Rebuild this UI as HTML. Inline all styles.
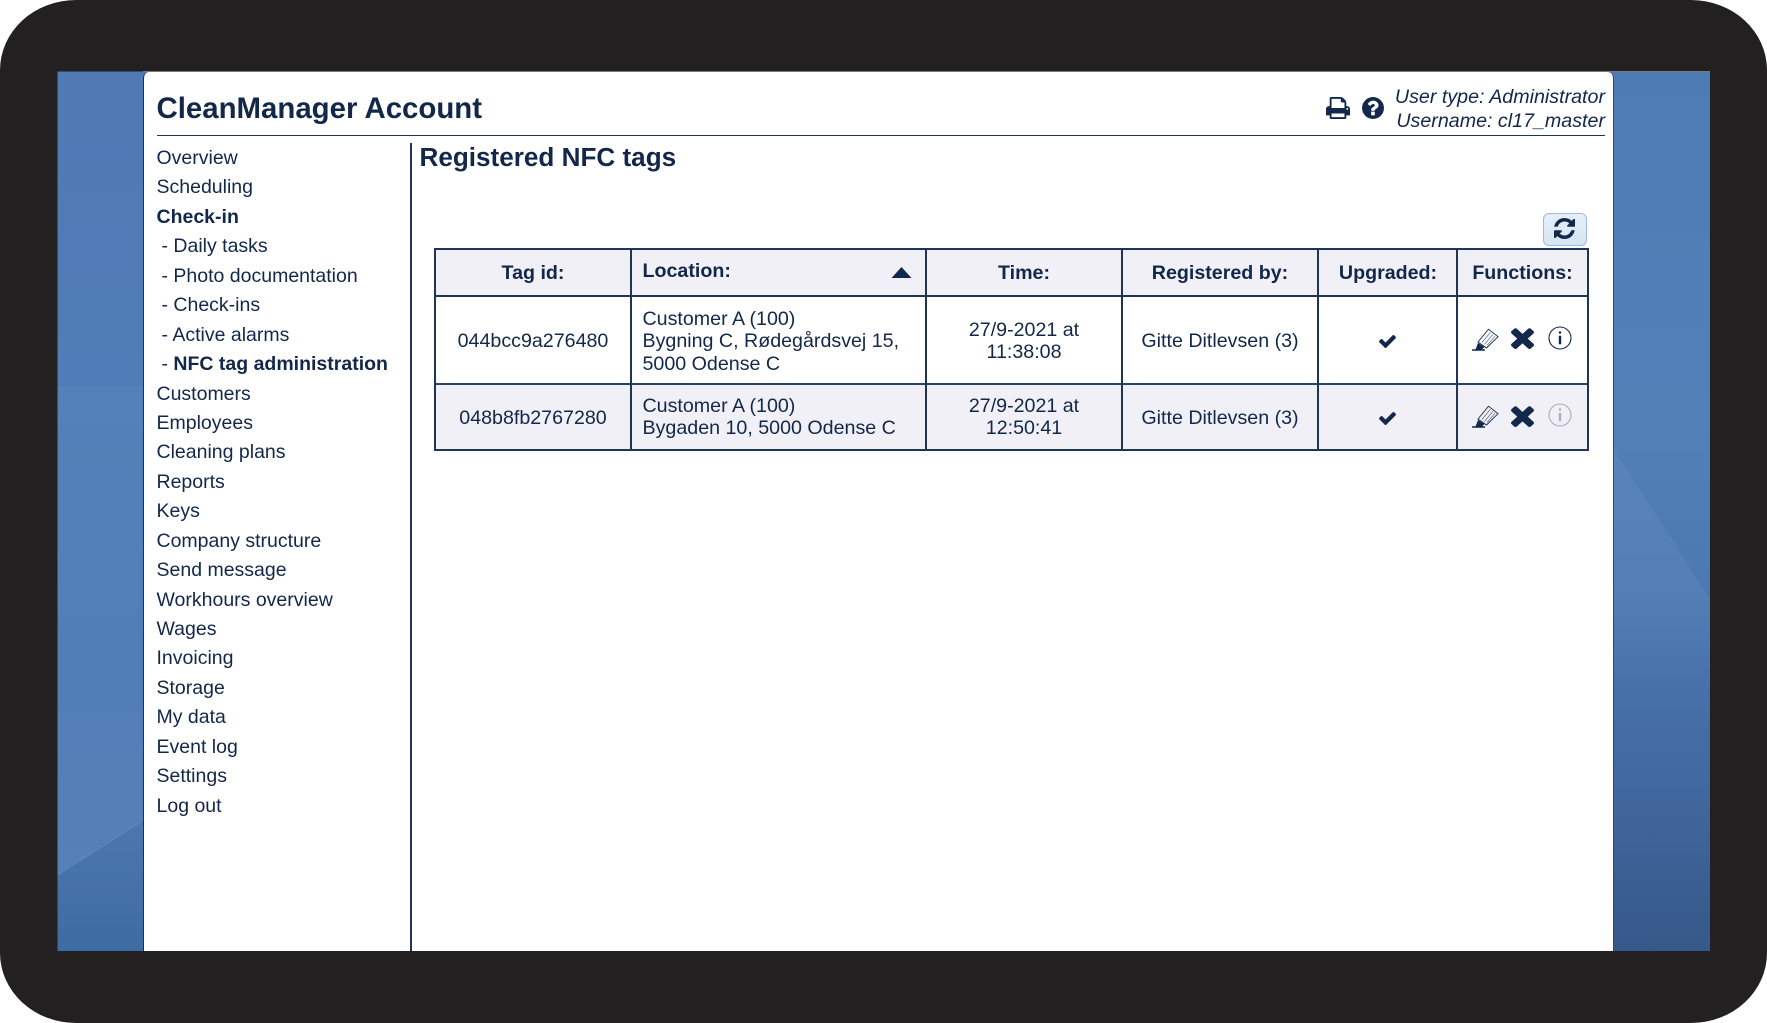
<!DOCTYPE html>
<html><head><meta charset="utf-8"><title>CleanManager Account</title>
<style>
html,body{margin:0;padding:0;background:#fff;width:1767px;height:1023px;overflow:hidden}
body{font-family:"Liberation Sans",Arial,sans-serif;color:#12274a;position:relative}
#frame{position:absolute;left:0;top:0;width:1767px;height:1023px;background:#222021;border-radius:76px/70px;overflow:hidden;filter:blur(.3px)}
#bg{position:absolute;left:0;top:0}
#panel{position:absolute;left:143px;top:72px;width:1469px;height:879px;background:#fff;border-left:1.5px solid #1c3358;border-right:1.5px solid #30476e;border-radius:6px 6px 0 0;box-sizing:content-box}
.a{position:absolute;white-space:nowrap}
.hl{position:absolute;background:#1e3558}
#nav{position:absolute;left:156.5px;top:144px;font-size:19.5px;line-height:29.45px;white-space:nowrap}
#nav div{height:29.45px}
#nav .s{padding-left:5px}
b{font-weight:700}
.c{text-align:center;font-size:19.65px;line-height:22.5px}
.l{font-size:19.65px;line-height:22.5px}
.h{font-weight:700;font-size:19.65px;line-height:22px;text-align:center}
.cell{position:absolute;background:#f0f0f6}
svg.i{position:absolute;fill:#13294b}
</style></head>
<body>
<div id="frame">
<svg id="bg" width="1767" height="1023" xmlns="http://www.w3.org/2000/svg">
<defs>
<linearGradient id="lt" x1="0" y1="0" x2="0" y2="1"><stop offset="0" stop-color="#4f7ab4"/><stop offset="1" stop-color="#507cb7"/></linearGradient>
<linearGradient id="lm" x1="0" y1="0" x2="0" y2="1"><stop offset="0" stop-color="#5481b9"/><stop offset=".6" stop-color="#527eb7"/><stop offset="1" stop-color="#5680b7"/></linearGradient>
<linearGradient id="lb" x1="0" y1="0" x2="0" y2="1"><stop offset="0" stop-color="#4c77af"/><stop offset="1" stop-color="#3f6ba3"/></linearGradient>
<linearGradient id="rg" x1="0" y1="0" x2="0" y2="1"><stop offset="0" stop-color="#4f7bb5"/><stop offset=".4" stop-color="#5480b8"/><stop offset=".6" stop-color="#4c78b0"/><stop offset=".8" stop-color="#4269a0"/><stop offset="1" stop-color="#365889"/></linearGradient>
<linearGradient id="wg" x1="0" y1="0" x2="0" y2="1"><stop offset="0" stop-color="#5f88ba" stop-opacity=".55"/><stop offset=".6" stop-color="#5f88ba" stop-opacity=".4"/><stop offset="1" stop-color="#5f88ba" stop-opacity="0"/></linearGradient>
</defs>
<rect x="57.5" y="71.5" width="90" height="315" fill="url(#lt)"/>
<rect x="57.5" y="386" width="90" height="490" fill="url(#lm)"/>
<polygon points="57.5,875 147,818 147,951 57.5,951" fill="url(#lb)"/>
<path d="M57.5 875L147 818" stroke="#6f94c2" stroke-width="1" opacity=".5"/>
<rect x="1610" y="71.5" width="100" height="879.5" fill="url(#rg)"/>
<polygon points="1613,448 1710,599 1710,680 1613,680" fill="url(#wg)"/>
</svg>
<div style="position:absolute;left:0;top:71px;width:1767px;height:1px;background:#77797c;clip-path:inset(0 57px 0 143px)"></div>
<div id="panel"></div>

<div class="a" style="left:156.5px;top:92px;font-size:29.4px;line-height:34px;font-weight:700">CleanManager Account</div>
<div class="hl" style="left:156.5px;top:134.5px;width:1448px;height:1.3px"></div>
<div class="a" style="right:162px;top:85px;font-size:19.66px;line-height:24px;font-style:italic;text-align:right">User type: Administrator<br>Username: cl17_master</div>

<svg class="i" style="left:1326px;top:97px" width="24" height="22" viewBox="64 128 1664 1536" preserveAspectRatio="none"><path d="M448 1536h896v-256h-896v256zm0-640h896v-384h-160q-40 0-68-28t-28-68v-160h-640v640zm1152 64q0-26-19-45t-45-19-45 19-19 45 19 45 45 19 45-19 19-45zm128 0v416q0 13-9.5 22.5t-22.5 9.5h-224v160q0 40-28 68t-68 28h-960q-40 0-68-28t-28-68v-160h-224q-13 0-22.5-9.5t-9.5-22.5v-416q0-79 56.5-135.5t135.5-56.5h64v-544q0-40 28-68t68-28h672q40 0 88 20t76 48l152 152q28 28 48 76t20 88v256h64q79 0 135.5 56.5t56.5 135.5z"/></svg>
<svg class="i" style="left:1362px;top:97px" width="22" height="22" viewBox="128 128 1536 1536"><path d="M1024 1376v-192q0-14-9-23t-23-9h-192q-14 0-23 9t-9 23v192q0 14 9 23t23 9h192q14 0 23-9t9-23zm256-672q0-88-55.5-163t-138.5-116-170-41q-243 0-371 213-15 24 8 42l132 100q7 6 19 6 16 0 25-12 53-68 86-92 34-24 86-24 48 0 85.5 26t37.5 59q0 38-20 61t-68 45q-63 28-115.5 86.5t-52.5 125.5v36q0 14 9 23t23 9h192q14 0 23-9t9-23q0-19 21.5-49.5t54.5-49.5q32-18 49-28.5t46-35 44.5-48 28-60.5 12.5-81zm384 192q0 209-103 385.5t-279.5 279.5-385.5 103-385.5-103-279.5-279.5-103-385.5 103-385.5 279.5-279.5 385.5-103 385.5 103 279.5 279.5 103 385.5z"/></svg>

<div id="nav">
<div>Overview</div><div>Scheduling</div><div><b>Check-in</b></div>
<div class="s">- Daily tasks</div><div class="s">- Photo documentation</div><div class="s">- Check-ins</div><div class="s">- Active alarms</div><div class="s">- <b>NFC tag administration</b></div>
<div>Customers</div><div>Employees</div><div>Cleaning plans</div><div>Reports</div><div>Keys</div><div>Company structure</div><div>Send message</div><div>Workhours overview</div><div>Wages</div><div>Invoicing</div><div>Storage</div><div>My data</div><div>Event log</div><div>Settings</div><div>Log out</div>
</div>
<div class="hl" style="left:410px;top:143px;width:1.5px;height:808px"></div>

<div class="a" style="left:419.5px;top:142px;font-size:26.1px;line-height:30px;font-weight:700">Registered NFC tags</div>

<div class="a" style="left:1543px;top:213px;width:44px;height:33px;box-sizing:border-box;border:1.3px solid #9dbbe0;border-radius:6px;background:linear-gradient(#e6eff8,#d6e4f3)"></div>
<svg class="i" style="left:1554px;top:218px" width="21" height="21" viewBox="128 128 1536 1536"><path d="M1639 1056q0 5-1 7-64 268-268 434.5t-478 166.5q-146 0-282.5-55t-243.5-157l-129 129q-19 19-45 19t-45-19-19-45v-448q0-26 19-45t45-19h448q26 0 45 19t19 45-19 45l-137 137q71 66 161 102t187 36q134 0 250-65t186-179q11-17 53-117 8-23 30-23h192q13 0 22.5 9.5t9.5 22.5zm25-800v448q0 26-19 45t-45 19h-448q-26 0-45-19t-19-45 19-45l138-138q-148-137-349-137-134 0-250 65t-186 179q-11 17-53 117-8 23-30 23h-199q-13 0-22.5-9.5t-9.5-22.5v-7q65-268 270-434.5t480-166.5q146 0 284 55.5t245 156.5l130-129q19-19 45-19t45 19 19 45z"/></svg>

<!-- table fills -->
<div class="cell" style="left:435px;top:249px;width:1153px;height:47px"></div>
<div class="cell" style="left:435px;top:384px;width:1153px;height:66px"></div>
<!-- table lines -->
<div class="hl" style="left:434px;top:248px;width:1155px;height:2px"></div>
<div class="hl" style="left:434px;top:295px;width:1155px;height:2px"></div>
<div class="hl" style="left:434px;top:383px;width:1155px;height:2px;background:#2c4163"></div>
<div class="hl" style="left:434px;top:449px;width:1155px;height:2px"></div>
<div class="hl" style="left:434px;top:248px;width:2px;height:203px"></div>
<div class="hl" style="left:630px;top:248px;width:2px;height:203px"></div>
<div class="hl" style="left:925px;top:248px;width:2px;height:203px"></div>
<div class="hl" style="left:1121px;top:248px;width:2px;height:203px"></div>
<div class="hl" style="left:1317px;top:248px;width:2px;height:203px"></div>
<div class="hl" style="left:1456px;top:248px;width:2px;height:203px"></div>
<div class="hl" style="left:1587px;top:248px;width:2px;height:203px"></div>

<!-- header -->
<div class="a h" style="left:435px;width:196px;top:262px">Tag id:</div>
<div class="a h" style="left:642.5px;top:260px">Location:</div>
<svg class="i" style="left:891px;top:267px" width="21" height="11" viewBox="0 0 20 11"><path d="M10 0L20 11H0z"/></svg>
<div class="a h" style="left:926px;width:196px;top:262px">Time:</div>
<div class="a h" style="left:1122px;width:196px;top:262px">Registered by:</div>
<div class="a h" style="left:1319px;width:138px;top:262px">Upgraded:</div>
<div class="a h" style="left:1458px;width:129px;top:262px">Functions:</div>

<!-- row 1 -->
<div class="a c" style="left:435px;width:196px;top:330px">044bcc9a276480</div>
<div class="a l" style="left:642.5px;top:307.5px">Customer A (100)<br>Bygning C, Rødegårdsvej 15,<br>5000 Odense C</div>
<div class="a c" style="left:926px;width:196px;top:318.5px">27/9-2021 at<br>11:38:08</div>
<div class="a c" style="left:1122px;width:196px;top:330px">Gitte Ditlevsen (3)</div>
<svg class="i" style="left:1379px;top:335px" width="17" height="13" viewBox="121 334 1550 1188"><path d="M1671 566q0 40-28 68l-724 724-136 136q-28 28-68 28t-68-28l-136-136-362-362q-28-28-28-68t28-68l136-136q28-28 68-28t68 28l294 295 656-657q28-28 68-28t68 28l136 136q28 28 28 68z"/></svg>
<svg class="i" style="left:1472px;top:328px;overflow:visible" width="27" height="23" viewBox="0 0 27 23"><g fill="none" stroke="#13294b"><path d="M6 14L16.5 1.2 26 8.7 14.5 20z" stroke-width=".9"/><path d="M10 14.5L18.5 4.2M12.5 16.5L21 6.2M15 17.5L23 8.2" stroke-width=".7" opacity=".7"/><path d="M0 22h13" stroke-width="1.4"/></g><path d="M6 15L3.5 21.5h6.5L12.5 19z"/></svg>
<svg class="i" style="left:1511px;top:326px" width="23" height="23" viewBox="302 238 1188 1316" preserveAspectRatio="none"><path d="M1490 1322q0 40-28 68l-136 136q-28 28-68 28t-68-28l-294-294-294 294q-28 28-68 28t-68-28l-136-136q-28-28-28-68t28-68l294-294-294-294q-28-28-28-68t28-68l136-136q28-28 68-28t68 28l294 294 294-294q28-28 68-28t68 28l136 136q28 28 28 68t-28 68l-294 294 294 294q28 28 28 68z"/></svg>
<svg class="i" style="left:1548px;top:326px" width="24" height="24" viewBox="0 0 24 24"><circle cx="12" cy="12" r="11" fill="none" stroke="#13294b" stroke-width="1.1"/><rect x="10.8" y="5.2" width="2.4" height="2.6" rx="1"/><path d="M10.8 9.8h2.4v8.4h-2.4z"/></svg>

<!-- row 2 -->
<div class="a c" style="left:435px;width:196px;top:407px">048b8fb2767280</div>
<div class="a l" style="left:642.5px;top:394.5px">Customer A (100)<br>Bygaden 10, 5000 Odense C</div>
<div class="a c" style="left:926px;width:196px;top:394.5px">27/9-2021 at<br>12:50:41</div>
<div class="a c" style="left:1122px;width:196px;top:407px">Gitte Ditlevsen (3)</div>
<svg class="i" style="left:1379px;top:412px" width="17" height="13" viewBox="121 334 1550 1188"><path d="M1671 566q0 40-28 68l-724 724-136 136q-28 28-68 28t-68-28l-136-136-362-362q-28-28-28-68t28-68l136-136q28-28 68-28t68 28l294 295 656-657q28-28 68-28t68 28l136 136q28 28 28 68z"/></svg>
<svg class="i" style="left:1472px;top:405px;overflow:visible" width="27" height="23" viewBox="0 0 27 23"><g fill="none" stroke="#13294b"><path d="M6 14L16.5 1.2 26 8.7 14.5 20z" stroke-width=".9"/><path d="M10 14.5L18.5 4.2M12.5 16.5L21 6.2M15 17.5L23 8.2" stroke-width=".7" opacity=".7"/><path d="M0 22h13" stroke-width="1.4"/></g><path d="M6 15L3.5 21.5h6.5L12.5 19z"/></svg>
<svg class="i" style="left:1511px;top:403.5px" width="23" height="23" viewBox="302 238 1188 1316" preserveAspectRatio="none"><path d="M1490 1322q0 40-28 68l-136 136q-28 28-68 28t-68-28l-294-294-294 294q-28 28-68 28t-68-28l-136-136q-28-28-28-68t28-68l294-294-294-294q-28-28-28-68t28-68l136-136q28-28 68-28t68 28l294 294 294-294q28-28 68-28t68 28l136 136q28 28 28 68t-28 68l-294 294 294 294q28 28 28 68z"/></svg>
<svg class="i" style="left:1548px;top:403px;fill:#a9afbc" width="24" height="24" viewBox="0 0 24 24"><circle cx="12" cy="12" r="11" fill="none" stroke="#a9afbc" stroke-width="1.1"/><rect x="10.8" y="5.2" width="2.4" height="2.6" rx="1"/><path d="M10.8 9.8h2.4v8.4h-2.4z"/></svg>
</div>
</body></html>
